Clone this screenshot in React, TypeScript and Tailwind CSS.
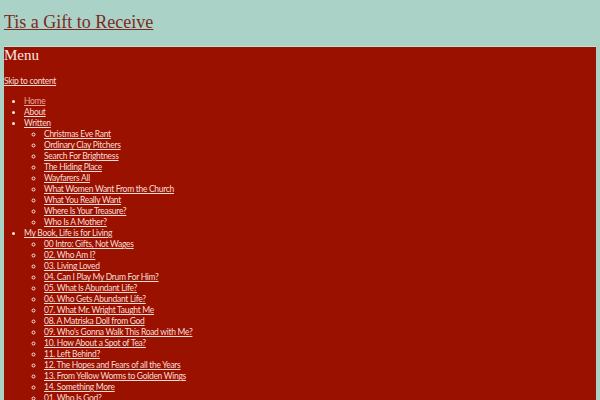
import React from 'react'

const written = [
  'Christmas Eve Rant',
  'Ordinary Clay Pitchers',
  'Search For Brightness',
  'The Hiding Place',
  'Wayfarers All',
  'What Women Want From the Church',
  'What You Really Want',
  'Where Is Your Treasure?',
  'Who Is A Mother?',
]

const book = [
  '00 Intro: Gifts, Not Wages',
  '02. Who Am I?',
  '03. Living Loved',
  '04. Can I Play My Drum For Him?',
  '05. What Is Abundant Life?',
  '06. Who Gets Abundant Life?',
  '07. What Mr. Wright Taught Me',
  '08. A Matriska Doll from God',
  "09. Who's Gonna Walk This Road with Me?",
  '10. How About a Spot of Tea?',
  '11. Left Behind?',
  '12. The Hopes and Fears of all the Years',
  '13. From Yellow Worms to Golden Wings',
  '14. Something More',
  '01. Who Is God?',
]

function SubList({ items }: { items: string[] }) {
  return (
    <ul className="list-[circle] pl-5">
      {items.map((t) => (
        <li key={t} className="leading-[11px]">
          <a href="#" className="underline text-[#f6ddd6]">{t}</a>
        </li>
      ))}
    </ul>
  )
}

export default function App() {
  return (
    <div className="bg-[#aad2c7] px-1 overflow-hidden h-[400px]">
      <h1 className="pt-[10px] pb-[13px] text-[18px] leading-[24px] text-[#7b2a1f] font-['Liberation_Serif',serif]">
        <a href="#" className="underline">Tis a Gift to Receive</a>
      </h1>
      <nav className="bg-[#9a1100] border-t border-[#7a2012] shadow-[0_-1px_0_#d9d6c6] font-['Lato',sans-serif] text-[#f6ddd6]">
        <h2 className="text-[15px] leading-[14px] font-['Liberation_Serif',serif] text-[#f8e8e2]">Menu</h2>
        <a href="#" className="block mt-[14px] text-[8.5px] tracking-[-0.3px] leading-[11px] underline text-[#f6ddd6]">Skip to content</a>
        <ul className="list-disc pl-5 mt-[9px] text-[8.5px] tracking-[-0.3px] marker:text-[#f8e8e2]">
          <li className="leading-[11px]">
            <a href="#" className="underline text-[#eaa59c]">Home</a>
          </li>
          <li className="leading-[11px]">
            <a href="#" className="underline">About</a>
          </li>
          <li className="leading-[11px]">
            <a href="#" className="underline">Written</a>
            <SubList items={written} />
          </li>
          <li className="leading-[11px]">
            <a href="#" className="underline">My Book, Life is for Living</a>
            <SubList items={book} />
          </li>
        </ul>
      </nav>
    </div>
  )
}
